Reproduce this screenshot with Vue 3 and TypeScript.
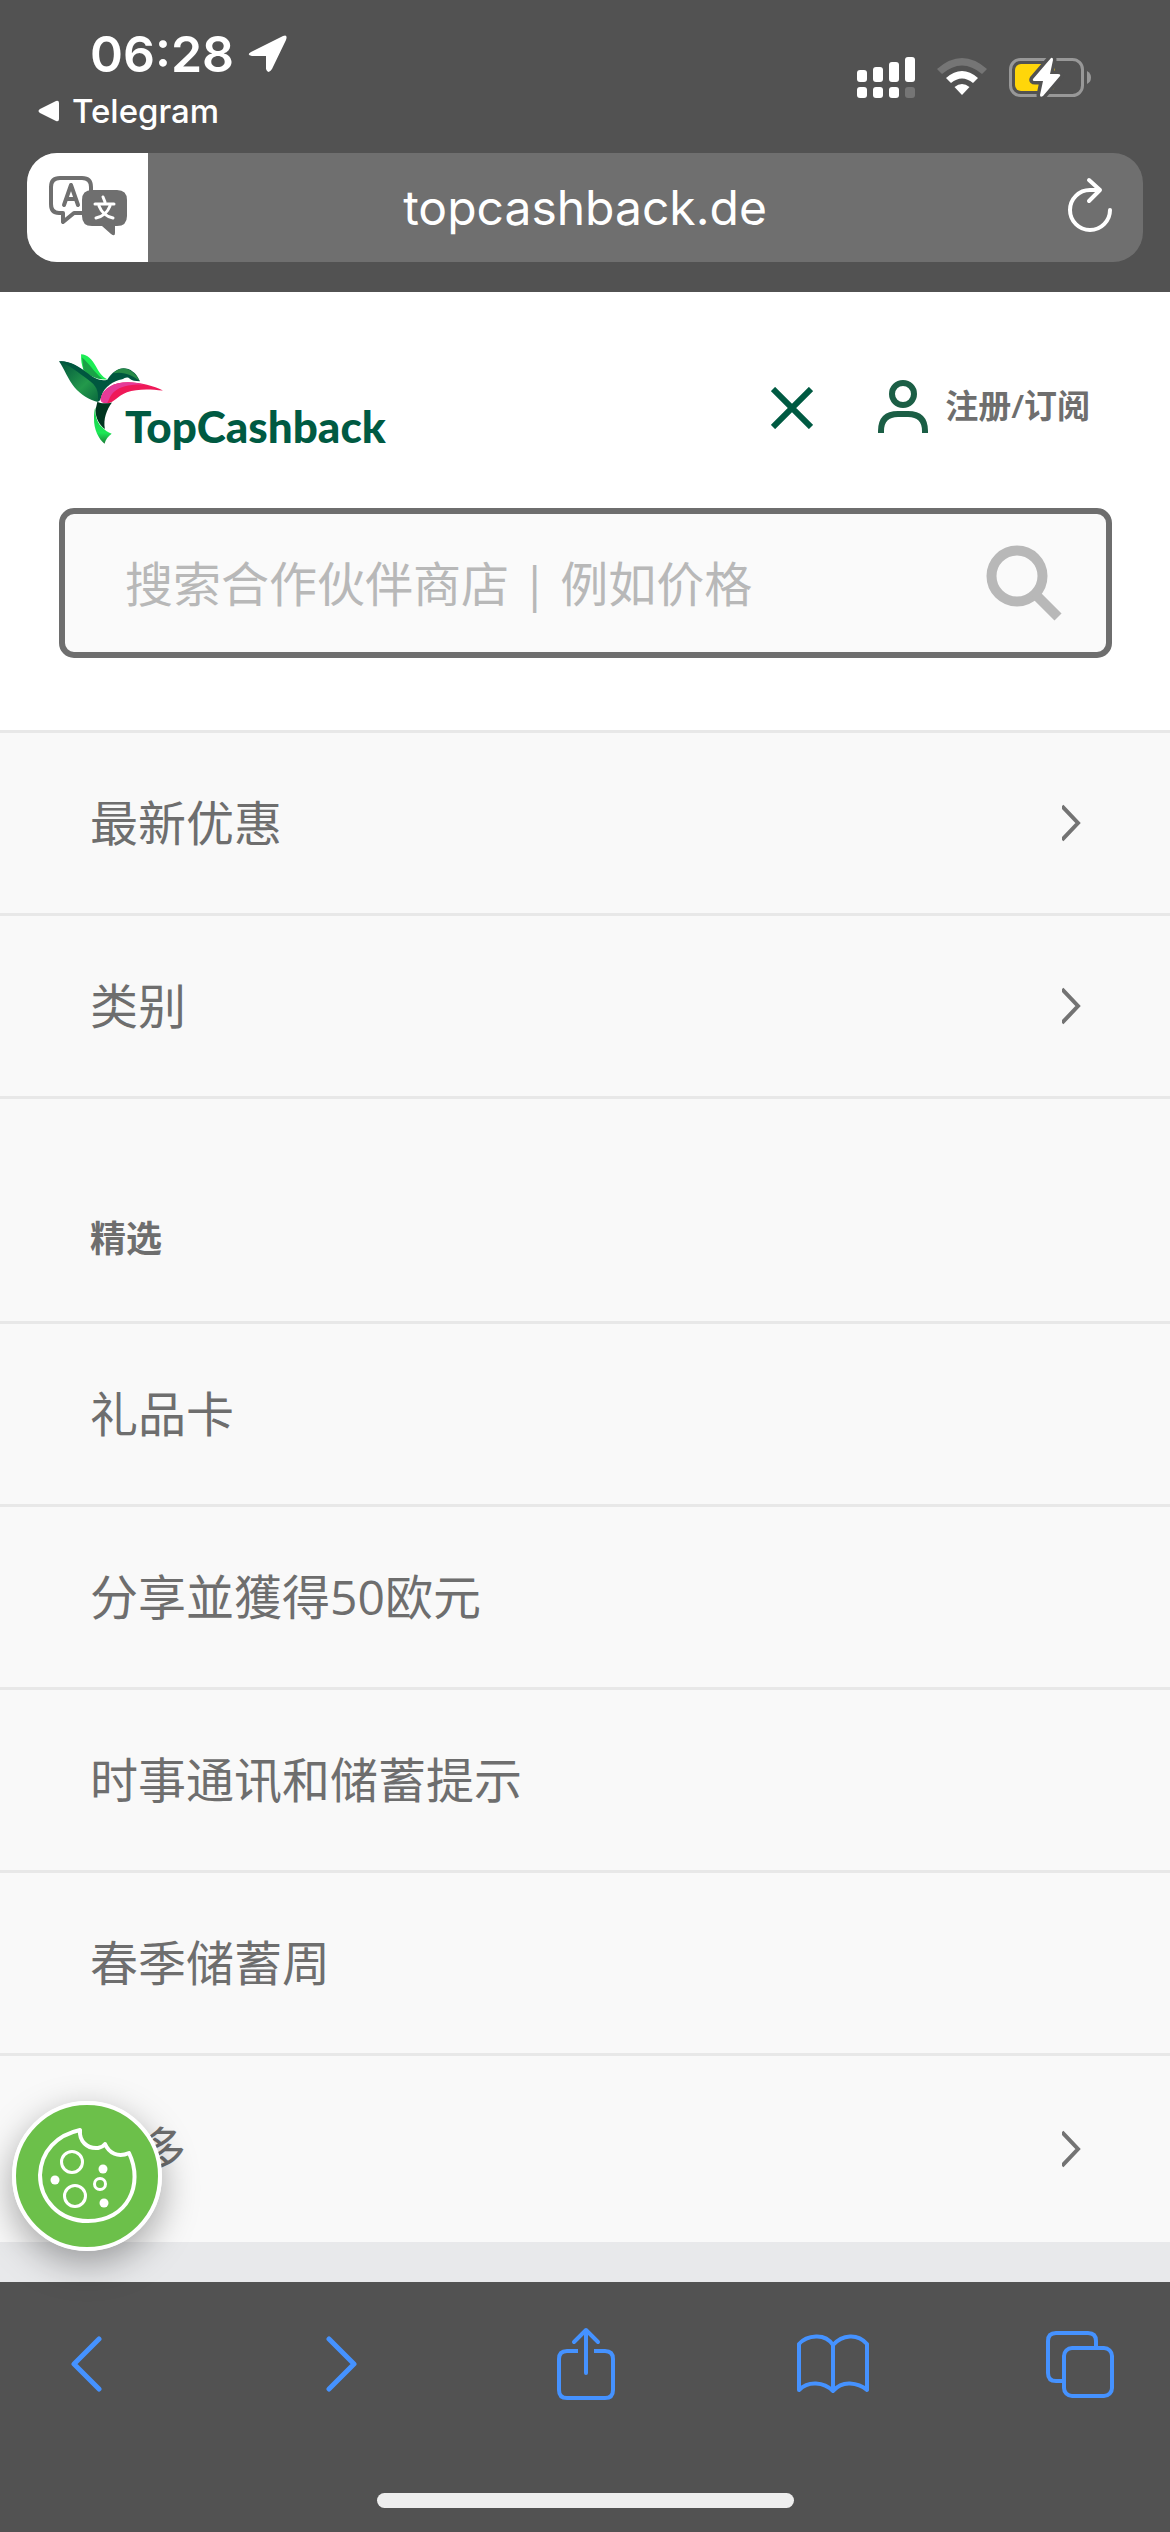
<script setup lang="ts">
import { ref } from 'vue'

interface MenuEntry {
  label: string
  expandable: boolean
}

const query = ref<string>('')

const mainEntries: MenuEntry[] = [
  { label: '最新优惠', expandable: true },
  { label: '类别', expandable: true },
]

const featuredEntries: MenuEntry[] = [
  { label: '礼品卡', expandable: false },
  { label: '分享並獲得50欧元', expandable: false },
  { label: '时事通讯和储蓄提示', expandable: false },
  { label: '春季储蓄周', expandable: false },
  { label: '更多', expandable: true },
]
</script>

<template>
  <div class="screen" lang="zh-CN">
    <header class="browser-top">
      <div class="status">
        <div class="status-left">
          <div class="clock">
            <span>06:28</span>
            <svg width="40" height="40" viewBox="0 0 40 40" aria-hidden="true">
              <path d="M3 18 35 2Q40 0 38 6L24 35Q20 41 18 35V22H4Q-2 21 3 18Z" fill="#fff" />
            </svg>
          </div>
          <button class="back-app" type="button">
            <svg width="22" height="22" viewBox="0 0 22 22" aria-hidden="true">
              <path d="M2 9 18 1Q21 0 21 3V19Q21 22 18 21L2 13Q-1 11 2 9Z" fill="#fff" />
            </svg>
            <span>Telegram</span>
          </button>
        </div>
        <div class="status-right">
          <svg width="58" height="41" viewBox="0 0 58 41" fill="#fff" aria-label="信号">
            <rect x="0" y="13" width="10" height="12" rx="3" />
            <rect x="16" y="10" width="10" height="15" rx="3" />
            <rect x="32" y="5" width="10" height="20" rx="3" />
            <rect x="48" y="0" width="10" height="25" rx="3" />
            <rect x="0" y="30" width="10" height="11" rx="3" />
            <rect x="16" y="30" width="10" height="11" rx="3" />
            <rect x="32" y="30" width="10" height="11" rx="3" />
            <rect x="48" y="30" width="10" height="11" rx="3" fill="#757575" />
          </svg>
          <svg width="50" height="38" viewBox="0 0 50 38" aria-label="Wi-Fi">
            <path d="M0 11Q25-11 50 11L45 16Q25-1 5 16Z" fill="#757575" />
            <path d="M9 20Q25 6 41 20L36 25Q25 16 14 25Z" fill="#fff" />
            <path d="M17.500 29Q25 23 32.500 29L25 37Z" fill="#fff" />
          </svg>
          <svg width="82" height="41" viewBox="0 0 82 41" aria-label="电池">
            <rect x="1.500" y="2.500" width="72" height="36" rx="10" fill="none" stroke="#989898" stroke-width="3" />
            <path d="M78 14Q82 16 82 20.500T78 27Z" fill="#989898" />
            <rect x="6" y="7" width="40" height="27" rx="6" fill="#ffd60a" />
            <path d="M42 1 24 22Q23 24 26 24H34L31 38Q31 41 34 39L51 19Q52 17 49 17H41L44 3Q44 0 42 1Z" fill="#fff" stroke="#525252" stroke-width="7" />
            <path d="M42 1 24 22Q23 24 26 24H34L31 38Q31 41 34 39L51 19Q52 17 49 17H41L44 3Q44 0 42 1Z" fill="#fff" />
          </svg>
        </div>
      </div>

      <div class="address">
        <button class="translate" type="button" aria-label="翻译">
          <svg width="80" height="66" viewBox="0 0 80 66" aria-hidden="true">
            <path d="M36 38H26L15 47V38H11Q3 38 3 29V12Q3 3 12 3H34Q43 3 43 12V18" fill="none" stroke="#6f6f6f" stroke-width="4" stroke-linejoin="round" />
            <path d="M16 30 23 10 30 30M18 24H28" fill="none" stroke="#6f6f6f" stroke-width="4" stroke-linecap="round" stroke-linejoin="round" />
            <path d="M44 15H69Q79 15 79 25V41Q79 51 69 51H67V58Q67 62 63 59L54 51H44Q34 51 34 41V25Q34 15 44 15Z" fill="#6f6f6f" />
            <path d="M55 22 57 27M47 29H66M51 31Q55 41 65 43M62 31Q58 41 48 43" fill="none" stroke="#fff" stroke-width="3" stroke-linecap="round" />
          </svg>
        </button>
        <span class="domain">topcashback.de</span>
        <button class="reload" type="button" aria-label="重新加载">
          <svg width="46" height="56" viewBox="0 0 46 56" fill="none" stroke="#fff" stroke-width="4" stroke-linecap="round" stroke-linejoin="round" aria-hidden="true">
            <path d="M43 33A20 20 0 1 1 23 13H33M22 3 33 13 22 24" />
          </svg>
        </button>
      </div>
    </header>

    <main>
      <section class="site-header">
        <div class="brand-row">
          <a class="brand" href="#" aria-label="TopCashback">
            <svg width="104" height="90" viewBox="62 72 306 264" aria-hidden="true">
              <defs>
                <linearGradient id="wing" x1="0" y1="0" x2="1" y2="1">
                  <stop offset="0" stop-color="#00523c" />
                  <stop offset="0.600" stop-color="#23994b" />
                  <stop offset="1" stop-color="#08653d" />
                </linearGradient>
                <linearGradient id="tail" x1="0" y1="0" x2="0" y2="1">
                  <stop offset="0" stop-color="#15c94a" />
                  <stop offset="0.700" stop-color="#1ce956" />
                  <stop offset="1" stop-color="#1a7a36" />
                </linearGradient>
              </defs>
              <path d="M127 72C145 72 160 88 170 107C180 126 190 140 204 146C180 150 152 136 134 118C129 104 126 90 127 72Z" fill="#1ced55" />
              <path d="M130 82C150 98 164 124 190 145C165 145 145 130 134 118Z" fill="#1aa247" />
              <path d="M62 93C86 90 116 106 150 130L182 170L176 213C150 206 125 190 108 170C88 146 78 116 62 93Z" fill="url(#wing)" />
              <path d="M62 93C90 90 120 106 150 131C170 144 184 152 204 147C222 120 243 108 266 116C285 124 294 138 300 152C286 151 277 150 271 145C263 137 256 142 248 146C222 150 196 168 187 195C184 208 180 212 176 211C180 180 172 164 148 147C120 128 92 103 62 93Z" fill="#00573f" />
              <path d="M222 128C240 109 262 112 276 123C286 130 294 140 300 152C280 134 252 122 222 128Z" fill="#278a47" />
              <path d="M185 202C192 172 224 155 265 155C305 156 340 166 368 179C326 174 290 174 262 184C235 194 225 214 205 217C190 216 183 212 185 202Z" fill="#ef1958" />
              <path d="M185 202C192 172 224 155 265 155C282 155 299 158 315 162C270 160 244 168 226 181C211 193 209 209 204 216C190 216 183 212 185 202Z" fill="#e53b98" />
              <path d="M175 212C186 218 199 218 218 214C202 236 192 262 197 292C181 282 170 260 169 238Z" fill="#00351f" />
              <path d="M169 228C168 254 174 272 186 284C196 294 206 303 217 306C207 314 199 322 196 336C179 322 164 294 165 260C165 248 166 236 169 228Z" fill="url(#tail)" />
            </svg>
            <span class="brand-name">TopCashback</span>
          </a>
          <button class="close" type="button" aria-label="关闭">
            <svg width="42" height="42" viewBox="0 0 42 42" aria-hidden="true">
              <path d="M2 2 40 40M40 2 2 40" stroke="#005a42" stroke-width="6" />
            </svg>
          </button>
          <a class="account" href="#">
            <svg width="50" height="53" viewBox="0 0 50 53" fill="none" stroke="#1b5e45" stroke-width="6" aria-hidden="true">
              <circle cx="25" cy="14" r="11" />
              <path d="M3 53V51Q3 34 20 34H30Q47 34 47 51V53" />
            </svg>
            <span>注册/订阅</span>
          </a>
        </div>
        <form class="search" @submit.prevent>
          <input v-model="query" type="text" aria-label="搜索" placeholder="搜索合作伙伴商店 | 例如价格" />
          <button type="submit" aria-label="搜索">
            <svg width="76" height="76" viewBox="0 0 76 76" fill="none" stroke="#b8b8b8" stroke-width="10" aria-hidden="true">
              <circle cx="31" cy="31" r="25.500" />
              <path d="M49 49 72 72" />
            </svg>
          </button>
        </form>
      </section>

      <nav class="menu">
        <ul>
          <li v-for="entry in mainEntries" :key="entry.label">
            <a class="row" href="#">
              <span>{{ entry.label }}</span>
              <svg v-if="entry.expandable" width="19" height="40" viewBox="0 0 19 40" aria-hidden="true">
                <path d="M0 3 16 20 0 37" fill="none" stroke="#737373" stroke-width="4" />
              </svg>
            </a>
          </li>
        </ul>
        <h2>精选</h2>
        <ul class="featured">
          <li v-for="entry in featuredEntries" :key="entry.label">
            <a class="row" href="#">
              <span>{{ entry.label }}</span>
              <svg v-if="entry.expandable" width="19" height="40" viewBox="0 0 19 40" aria-hidden="true">
                <path d="M0 3 16 20 0 37" fill="none" stroke="#737373" stroke-width="4" />
              </svg>
            </a>
          </li>
        </ul>
      </nav>

      <button class="cookie" type="button" aria-label="Cookie">
        <svg width="150" height="150" viewBox="0 0 150 150" fill="none" stroke="#fff" stroke-width="4" aria-hidden="true">
          <circle cx="75" cy="75" r="73" fill="#6cc04a" />
          <path d="M68 29C67 40 75 48 86 47Q91 46 93 43C97 52 106 57 117 52C132 83 116 120 76 120C46 120 28 98 28 74C29 50 45 34 68 29Z" stroke-linejoin="round" />
          <circle cx="60" cy="61" r="10.500" stroke-width="3" />
          <circle cx="63" cy="95" r="10.500" stroke-width="3" />
          <circle cx="88" cy="83" r="5.500" stroke-width="3" />
          <g fill="#fff" stroke="none">
            <circle cx="91" cy="68" r="4.500" />
            <circle cx="43" cy="79" r="4.500" />
            <circle cx="92" cy="102" r="4.500" />
          </g>
        </svg>
      </button>
    </main>

    <footer class="browser-bottom">
      <div class="toolbar">
        <button type="button" aria-label="后退">
          <svg width="32" height="56" viewBox="0 0 32 56"><path d="M29 3 4 28 29 53" /></svg>
        </button>
        <button type="button" aria-label="前进">
          <svg width="32" height="56" viewBox="0 0 32 56"><path d="M3 3 28 28 3 53" /></svg>
        </button>
        <button type="button" aria-label="分享">
          <svg width="58" height="74" viewBox="0 0 58 74">
            <path d="M29 46V3M17 15 29 3 41 15" />
            <path d="M21 24H10Q2 24 2 32V63Q2 71 10 71H48Q56 71 56 63V32Q56 24 48 24H37" stroke-linecap="butt" />
          </svg>
        </button>
        <button type="button" aria-label="书签">
          <svg width="72" height="60" viewBox="0 0 72 60">
            <path d="M36 11Q30 2 19 2.500T2 10V56Q9 49 19 49.500T36 57Q43 49 53 49.500T70 56V10Q63 2 53 2.500T36 11V57" />
          </svg>
        </button>
        <button type="button" aria-label="标签页">
          <svg width="68" height="67" viewBox="0 0 68 67">
            <path d="M50 16V10Q50 2 42 2H10Q2 2 2 10V42Q2 50 10 50H17" stroke-linecap="butt" />
            <rect x="18" y="17" width="48" height="48" rx="8" />
          </svg>
        </button>
      </div>
      <div class="home-bar"></div>
    </footer>
  </div>
</template>

<style>
body {
  margin: 0;
}
</style>

<style scoped>
.screen {
  min-height: 100vh;
  display: flex;
  flex-direction: column;
  background: #e8e9eb;
  color: #6e6e6e;
  font-family: "Open Sans", "Noto Sans CJK SC", sans-serif;
}

*,
*::before {
  box-sizing: border-box;
}

button {
  display: flex;
  align-items: center;
  justify-content: center;
  padding: 0;
  border: 0;
  background: none;
  font: inherit;
  color: inherit;
}

a {
  color: inherit;
  text-decoration: none;
}

svg {
  display: block;
  flex: none;
}

.browser-top {
  padding-bottom: 30px;
  background: #525252;
  color: #fff;
  font-family: Inter, sans-serif;
}

.status {
  display: flex;
  justify-content: space-between;
  height: 153px;
  padding: 24px 79px 0 38px;
}

.clock {
  display: flex;
  align-items: center;
  gap: 14px;
  padding-left: 52px;
  font-size: 50px;
  font-weight: 600;
  line-height: 60px;
}

.back-app {
  gap: 12px;
  margin-top: 7px;
  font-size: 33px;
  font-weight: 500;
  line-height: 40px;
}

.status-right {
  display: flex;
  align-items: center;
  gap: 22px;
  height: 106px;
}

.address {
  display: grid;
  grid-template-columns: 121px 1fr 121px;
  height: 109px;
  margin: 0 27px;
  border-radius: 30px;
  overflow: hidden;
  background: #6f6f6f;
}

.translate {
  background: #fff;
}

.domain {
  align-self: center;
  text-align: center;
  font-size: 48px;
  line-height: 60px;
}

.reload {
  padding-bottom: 6px;
  padding-left: 14px;
}

main {
  position: relative;
  flex: 1;
  padding-bottom: 40px;
}

.site-header {
  padding: 60px 58px 72px 59px;
  background: #fff;
}

.brand-row {
  display: flex;
  align-items: center;
  height: 108px;
}

.brand {
  display: flex;
  align-items: flex-start;
  height: 104px;
  margin-right: auto;
}

.brand-name {
  align-self: flex-end;
  margin-bottom: 8px;
  margin-left: -38px;
  color: #005a42;
  font-family: Lato, sans-serif;
  font-size: 44px;
  font-weight: 900;
  line-height: 48px;
}

.close {
  width: 42px;
  margin-right: 65px;
  padding-top: 4px;
}

.account {
  display: flex;
  align-items: center;
  gap: 17px;
  margin-right: 22px;
  font-size: 33px;
  font-weight: 600;
  line-height: 40px;
}

.search {
  display: flex;
  align-items: center;
  height: 150px;
  margin-top: 48px;
  padding: 0 44px 0 60px;
  border: 6px solid #6e6e6e;
  border-radius: 15px;
  background: #fafafa;
}

.search input {
  flex: 1;
  min-width: 0;
  height: 100px;
  padding: 0;
  border: 0;
  outline: 0;
  background: none;
  color: #6e6e6e;
  font: inherit;
  font-size: 48px;
}

.search input::placeholder {
  color: #b8b8b8;
  opacity: 1;
}

.menu {
  background: #f9f9f9;
}

ul {
  margin: 0;
  padding: 0;
  list-style: none;
}

.row {
  display: flex;
  align-items: center;
  justify-content: space-between;
  height: 183px;
  padding: 0 89px 0 90px;
  border-top: 3px solid #e8e8e8;
  font-size: 48px;
  line-height: 64px;
}

.featured li:last-child .row {
  height: 189px;
}

h2 {
  height: 225px;
  margin: 0;
  padding: 116px 90px 0;
  border-top: 3px solid #e8e8e8;
  font-size: 36px;
  font-weight: 700;
  line-height: 48px;
}

.cookie {
  position: absolute;
  left: 12px;
  bottom: 31px;
  border-radius: 50%;
  box-shadow: 0 12px 36px rgba(0, 0, 0, 0.35);
}

.browser-bottom {
  height: 250px;
  padding-top: 42px;
  background: #525252;
}

.toolbar {
  display: grid;
  grid-template-columns: 172fr 339fr 149fr 345fr 149fr 16fr;
  height: 80px;
}

.toolbar svg {
  fill: none;
  stroke: #4592ff;
  stroke-width: 4;
  stroke-linecap: round;
  stroke-linejoin: round;
}

.toolbar button:nth-child(-n + 2) svg {
  stroke-width: 5;
}

.home-bar {
  width: 417px;
  height: 15px;
  margin: 89px auto 0;
  border-radius: 8px;
  background: #eee;
}
</style>
